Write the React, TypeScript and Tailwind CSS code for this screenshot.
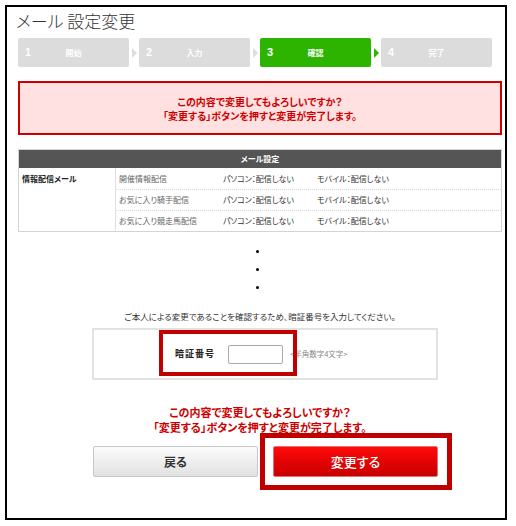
const steps = [
  { num: "1", label: "開始", active: false },
  { num: "2", label: "入力", active: false },
  { num: "3", label: "確認", active: true },
  { num: "4", label: "完了", active: false },
];

const rows = [
  { name: "開催情報配信", pc: "パソコン：配信しない", mobile: "モバイル：配信しない" },
  { name: "お気に入り騎手配信", pc: "パソコン：配信しない", mobile: "モバイル：配信しない" },
  { name: "お気に入り競走馬配信", pc: "パソコン：配信しない", mobile: "モバイル：配信しない" },
];

const jp = "font-['Noto_Sans_CJK_JP','Liberation_Sans',sans-serif] [font-feature-settings:'palt']";

function StepBar() {
  return (
    <div className="mt-[3px] flex h-[29px]">
      {steps.map((s, i) => (
        <div key={s.num} className="flex">
          <div
            className={`grid h-[29px] w-[111px] grid-cols-[22px_1fr_22px] items-center rounded-[2px] text-white ${
              s.active ? "bg-[#2db400]" : "bg-[#dcdcdc]"
            }`}
          >
            <span className="pl-[7px] font-['Liberation_Sans',sans-serif] text-[11px] font-bold">{s.num}</span>
            <span className="text-center text-[8px] font-bold">{s.label}</span>
            <span />
          </div>
          {i < steps.length - 1 && (
            <div className="flex w-[10px] items-center justify-center">
              <div
                className={`h-0 w-0 border-y-[5px] border-l-[5px] border-y-transparent ${
                  s.active ? "border-l-[#2db400]" : "border-l-[#dcdcdc]"
                }`}
              />
            </div>
          )}
        </div>
      ))}
    </div>
  );
}

function ConfirmText({ size }: { size: string }) {
  return (
    <div className={`text-center font-bold text-[#cc0000] ${size}`}>
      <p>この内容で変更してもよろしいですか？</p>
      <p>「変更する」ボタンを押すと変更が完了します。</p>
    </div>
  );
}

export default function App() {
  return (
    <div className={`bg-white ${jp}`}>
      <div className="ml-[5px] mt-[5px] h-[515px] w-[502px] border-2 border-black pl-[11px] pr-[3px]">
        <h1 className="-ml-[2px] h-[28px] text-[17px] font-light leading-[28px] text-[#333]">メール 設定変更</h1>

        <StepBar />

        <div className="mt-[14px] flex h-[54px] items-center justify-center border-2 border-[#cc0000] bg-[#ffe1e1] pt-[1px]">
          <ConfirmText size="text-[10px] leading-[14px]" />
        </div>

        <div className="mt-[14px] border border-[#d4d4d4] text-[8px]">
          <div className="flex h-[18px] items-center justify-center bg-[#555] font-bold text-white">メール設定</div>
          <div className="flex">
            <div className="w-[97px] border-r border-[#e0e0e0] pl-[3px] pt-[5px] font-bold text-[#222]">情報配信メール</div>
            <div className="flex-1">
              {rows.map((r, i) => (
                <div
                  key={r.name}
                  className={`flex h-[21px] items-center ${i > 0 ? "border-t border-dotted border-[#d8d8d8]" : ""}`}
                >
                  <span className="w-[107px] pl-[3px] text-[#666]">{r.name}</span>
                  <span className="w-[94px] text-[#333]">{r.pc}</span>
                  <span className="text-[#333]">{r.mobile}</span>
                </div>
              ))}
            </div>
          </div>
        </div>

        <div className="mt-[18px] flex flex-col items-center gap-[15px] pr-[6px]">
          <div className="h-[3px] w-[3px] rounded-full bg-black" />
          <div className="h-[3px] w-[3px] rounded-full bg-black" />
          <div className="h-[3px] w-[3px] rounded-full bg-black" />
        </div>

        <p className="mt-[21px] text-center text-[8.5px] leading-[12px] text-[#333]">
          ご本人による変更であることを確認するため、暗証番号を入力してください。
        </p>

        <div className="relative ml-[74px] mt-[6px] flex h-[52px] w-[346px] items-center border-2 border-[#e2e2e2] pl-[81px]">
          <span className="text-[9px] font-bold tracking-[1px] text-[#222]">暗証番号</span>
          <input
            type="text"
            className="ml-[13px] h-[19px] w-[55px] rounded-[2px] border border-[#aaa] bg-white"
          />
          <span className="ml-[7px] text-[7.5px] text-[#888]">&lt;半角数字4文字&gt;</span>
          <div className="pointer-events-none absolute left-[65px] top-0 h-[46px] w-[138px] border-4 border-[#c00000]" />
        </div>

        <div className="mt-[25px]">
          <ConfirmText size="text-[11px] leading-[15px]" />
        </div>

        <div className="ml-[75px] mt-[11px] flex gap-[15px]">
          <button
            type="button"
            className="h-[31px] w-[165px] rounded-[2px] border border-[#c8c8c8] bg-gradient-to-b from-[#fbfbfb] to-[#e2e2e2] text-[12px] font-bold text-[#333]"
          >
            戻る
          </button>
          <div className="relative">
            <button
              type="button"
              className="h-[31px] w-[165px] rounded-[2px] border border-[#e87070] bg-gradient-to-b from-[#ff0a0a] to-[#c80000] text-[13px] font-medium text-white"
            >
              変更する
            </button>
            <div className="pointer-events-none absolute -bottom-[13px] -left-[13px] -right-[14px] -top-[13px] border-[5px] border-[#c00000]" />
          </div>
        </div>
      </div>
    </div>
  );
}
